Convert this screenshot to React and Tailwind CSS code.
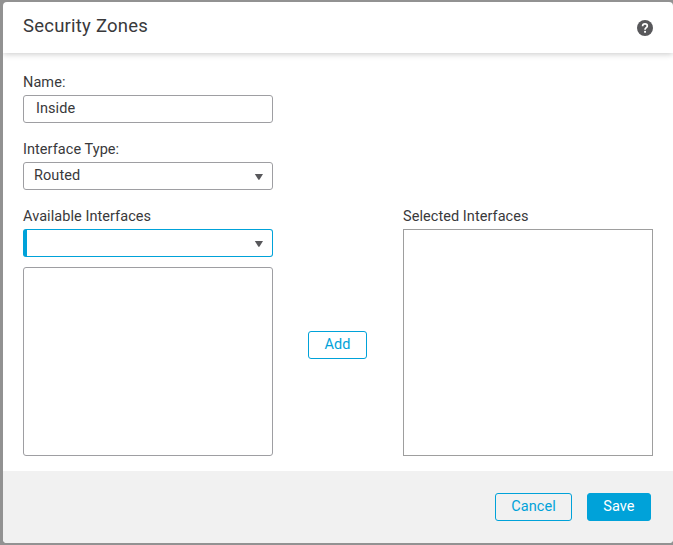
function Caret() {
  return (
    <svg className="mt-0.5 h-[6px] w-[9px]" viewBox="0 0 9 6" fill="#58585b">
      <path d="M.8 0H9L5.4 5.8h-1z" />
    </svg>
  );
}

function Label({ children }) {
  return <div className="h-[22px] leading-[20px]">{children}</div>;
}

function HelpIcon() {
  return (
    <svg className="h-4 w-4" viewBox="0 0 16 16">
      <circle cx="8" cy="8" r="8" fill="#58585b" />
      <path d="M5.6 6.2C5.6 4.7 6.6 3.9 8 3.9s2.3.8 2.3 2c0 1.7-2.3 1.7-2.3 3.8" fill="none" stroke="#fff" strokeWidth="1.7" />
      <rect x="7.1" y="10.9" width="1.9" height="1.8" fill="#fff" />
    </svg>
  );
}

export default function App() {
  return (
    <div className="h-[545px] w-[673px] bg-[#929292] pt-[2px] pl-[3px] font-[Roboto,'Liberation_Sans',Arial,sans-serif] text-[14.5px] tracking-[0.06px] text-[#39393b]">
      <div className="flex h-[541px] w-[670px] flex-col overflow-hidden rounded-[4px] bg-white">
        <header className="flex h-[51px] shrink-0 justify-between pr-5 pl-5 shadow-[0_1px_6px_rgba(0,0,0,0.22)]">
          <h1 className="h-12 text-[18.5px] leading-[48px] tracking-[0.23px]">Security Zones</h1>
          <div className="pt-[18px]"><HelpIcon /></div>
        </header>

        <main className="flex grow flex-col px-5 pt-[20px]">
          <Label>Name:</Label>
          <div className="h-7 w-[250px] rounded-[3px] border border-[#9e9ea2] pl-3 leading-[26px]">Inside</div>
          <div className="mt-[17px]"><Label>Interface Type:</Label></div>
          <div className="flex h-7 w-[250px] items-center justify-between rounded-[3px] border border-[#9e9ea2] pr-[9px] pl-[10px]">
            <span className="h-[26px] leading-[26px]">Routed</span>
            <Caret />
          </div>

          <div className="mt-[17px] flex">
            <section className="w-[250px]">
              <Label>Available Interfaces</Label>
              <div className="flex h-7 items-center justify-end rounded-[3px] border border-l-4 border-[#00a2d9] pr-[9px]">
                <Caret />
              </div>
              <div className="mt-[10px] h-[189px] rounded-[3px] border border-[#9e9ea2]" />
            </section>
            <div className="w-[130px] pt-[124px] pl-[35px]">
              <button className="h-7 w-[59px] rounded-[3px] border border-[#00a2d9] pb-px leading-[22px] text-[#00a2d9]">Add</button>
            </div>
            <section className="w-[250px]">
              <Label>Selected Interfaces</Label>
              <div className="h-[227px] border border-[#9e9e9e]" />
            </section>
          </div>
        </main>

        <footer className="flex h-[72px] shrink-0 justify-end gap-[15px] bg-[#f1f1f1] pt-[22px] pr-[22px]">
          <button className="h-7 w-[77px] rounded-[3px] border border-[#00a2d9] pb-px leading-[22px] text-[#00a2d9]">Cancel</button>
          <button className="h-7 w-[64px] rounded-[3px] border border-[#00a2d9] bg-[#00a2d9] pb-px leading-[22px] text-white">Save</button>
        </footer>
      </div>
    </div>
  );
}
